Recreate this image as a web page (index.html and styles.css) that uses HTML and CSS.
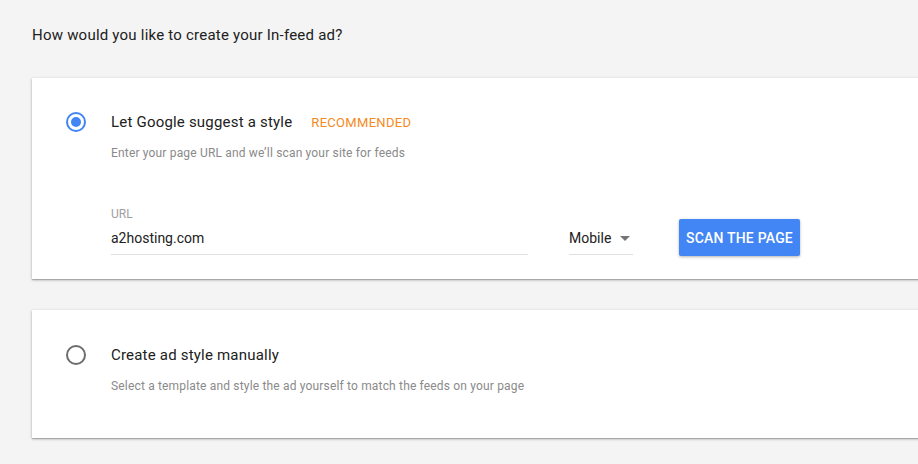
FILE: index.html
```html
<!DOCTYPE html>
<html>
<head>
<meta charset="utf-8">
<link rel="stylesheet" href="styles.css">
</head>
<body>
<div class="page">
  <h1 class="heading">How would you like to create your In-feed ad?</h1>

  <div class="card card-suggest">
    <span class="radio radio-on"><span class="dot"></span></span>
    <div class="option">
      <div class="title-row">
        <span class="title">Let Google suggest a style</span>
        <span class="badge">RECOMMENDED</span>
      </div>
      <div class="desc">Enter your page URL and we’ll scan your site for feeds</div>
      <div class="form-row">
        <div class="field url-field">
          <div class="label">URL</div>
          <div class="value">a2hosting.com</div>
        </div>
        <div class="field select-field">
          <div class="value">Mobile <svg class="caret" width="10" height="5" viewBox="0 0 10 5"><path d="M0 0h10L5 5z" fill="#757575"/></svg></div>
        </div>
        <button class="btn">SCAN THE PAGE</button>
      </div>
    </div>
  </div>

  <div class="card card-manual">
    <span class="radio"></span>
    <div class="option">
      <div class="title-row">
        <span class="title">Create ad style manually</span>
      </div>
      <div class="desc">Select a template and style the ad yourself to match the feeds on your page</div>
    </div>
  </div>
</div>
</body>
</html>
```

FILE: styles.css
```css
html, body {
  margin: 0;
  padding: 0;
  background: #f4f4f4;
  overflow: hidden;
}
body {
  font-family: Roboto, "Liberation Sans", Arial, sans-serif;
  color: #212121;
}
.page {
  padding: 25px 0 40px 32px;
  width: 900px;
}
.heading {
  margin: 0;
  font-size: 15px;
  font-weight: 400;
  line-height: 20px;
  color: #212121;
  letter-spacing: 0.22px;
}
.card {
  background: #fff;
  box-shadow: 0 1px 3px rgba(0,0,0,0.25), 0 1px 1px rgba(0,0,0,0.18);
  display: grid;
  grid-template-columns: 20px 1fr;
  column-gap: 25px;
  padding-left: 34px;
}
.card-suggest {
  margin-top: 33px;
  padding-top: 34px;
  padding-bottom: 24px;
}
.card-manual {
  margin-top: 31px;
  padding-top: 35px;
  padding-bottom: 43px;
}
.radio {
  width: 20px;
  height: 20px;
  box-sizing: border-box;
  border: 2px solid #6d6d6d;
  border-radius: 50%;
  display: flex;
  align-items: center;
  justify-content: center;
}
.radio-on {
  border-color: #4285f4;
}
.dot {
  width: 10px;
  height: 10px;
  border-radius: 50%;
  background: #4285f4;
}
.title-row {
  display: flex;
  align-items: center;
  height: 20px;
  gap: 19px;
}
.title {
  font-size: 15px;
  color: #212121;
  letter-spacing: 0.2px;
}
.badge {
  font-size: 13px;
  color: #f58a24;
  letter-spacing: 0.3px;
}
.desc {
  margin-top: 12px;
  font-size: 12px;
  line-height: 18px;
  color: #8a8a8a;
  letter-spacing: 0.17px;
}
.form-row {
  display: flex;
  align-items: flex-end;
  margin-top: 44px;
}
.field {
  border-bottom: 1px solid #e0e0e0;
}
.url-field {
  width: 417px;
}
.label {
  font-size: 12px;
  line-height: 16px;
  color: #9e9e9e;
}
.value {
  font-size: 14px;
  line-height: 20px;
  margin-top: 6px;
  padding-bottom: 6px;
  color: #212121;
  display: flex;
  align-items: center;
}
.select-field {
  margin-left: 41px;
  width: 64px;
}
.caret {
  margin-left: 9px;
}
.btn {
  margin-left: 46px;
  margin-bottom: -1px;
  height: 37px;
  width: 121px;
  border: none;
  border-radius: 2px;
  background: #4285f4;
  color: #fff;
  font-family: Roboto, "Liberation Sans", Arial, sans-serif;
  font-weight: 500;
  font-size: 14px;
  letter-spacing: 0.2px;
  padding: 0;
  box-shadow: 0 1px 3px rgba(0,0,0,0.3);
}
```
